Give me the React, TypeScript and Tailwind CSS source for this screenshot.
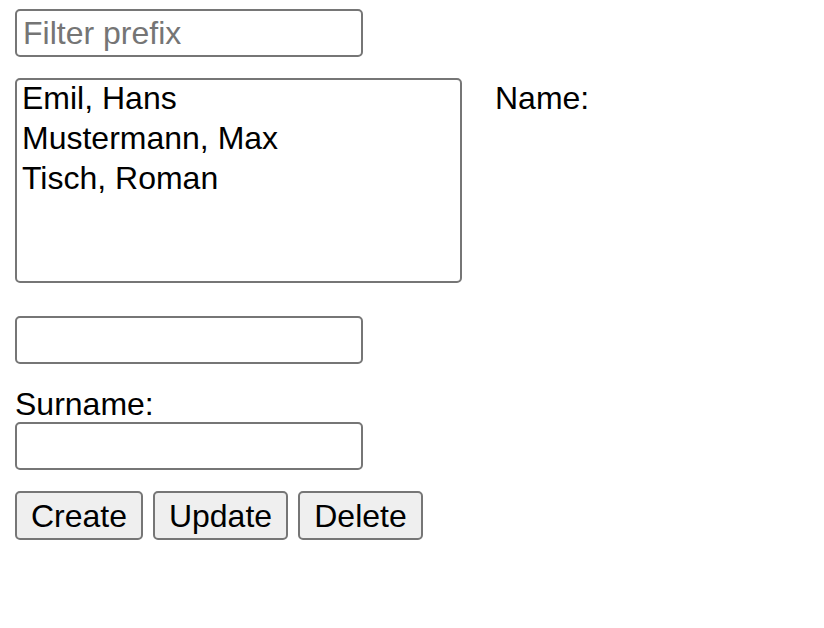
import React, { useState } from 'react';

type Person = { id: number; name: string; surname: string };

const initialPeople: Person[] = [
    { id: 1, name: 'Hans', surname: 'Emil' },
    { id: 2, name: 'Max', surname: 'Mustermann' },
    { id: 3, name: 'Roman', surname: 'Tisch' },
];

const inputClass =
    'block w-[348px] h-[48px] border-2 border-[#767676] rounded-[5px] bg-white px-[6px] outline-none placeholder:text-[#757575]';

const buttonClass =
    'h-[49px] border-2 border-[#767676] rounded-[5px] bg-[#efefef] text-black leading-none';

const App = () => {
    const [people, setPeople] = useState<Person[]>(initialPeople);
    const [filter, setFilter] = useState('');
    const [selected, setSelected] = useState<number | null>(null);
    const [name, setName] = useState('');
    const [surname, setSurname] = useState('');
    const [nextId, setNextId] = useState(4);

    const visible = people.filter((p) => p.surname.toLowerCase().startsWith(filter.toLowerCase()));

    const select = (p: Person) => {
        setSelected(p.id);
        setName(p.name);
        setSurname(p.surname);
    };

    const create = () => {
        if (!name && !surname) return;
        setPeople([...people, { id: nextId, name, surname }]);
        setNextId(nextId + 1);
    };

    const update = () => {
        if (selected === null) return;
        setPeople(people.map((p) => (p.id === selected ? { ...p, name, surname } : p)));
    };

    const remove = () => {
        if (selected === null) return;
        setPeople(people.filter((p) => p.id !== selected));
        setSelected(null);
        setName('');
        setSurname('');
    };

    return (
        <div className="min-h-[628px] bg-white pl-[15px] pt-[9px] font-['Liberation_Sans',Arial,sans-serif] text-[32px] text-black">
            <input
                className={inputClass}
                placeholder="Filter prefix"
                value={filter}
                onChange={(e) => setFilter(e.target.value)}
            />

            <div className="mt-[21px] flex items-start">
                <ul
                    role="listbox"
                    className="w-[447px] h-[205px] overflow-hidden border-2 border-[#767676] rounded-[5px] bg-white"
                >
                    {visible.map((p) => (
                        <li
                            key={p.id}
                            role="option"
                            aria-selected={selected === p.id}
                            onClick={() => select(p)}
                            className={`px-[5px] pb-[4px] leading-[36px] cursor-default ${
                                selected === p.id ? 'bg-[#cecece]' : ''
                            }`}
                        >
                            {p.surname}, {p.name}
                        </li>
                    ))}
                </ul>
                <label className="ml-[33px] mt-[2px] leading-[36px]">Name:</label>
            </div>

            <input className={`${inputClass} mt-[33px]`} value={name} onChange={(e) => setName(e.target.value)} />

            <label className="block mt-[22px] leading-[36px]">Surname:</label>
            <input className={inputClass} value={surname} onChange={(e) => setSurname(e.target.value)} />

            <div className="mt-[21px] flex gap-[10px]">
                <button onClick={create} className={`${buttonClass} w-[128px]`}>Create</button>
                <button onClick={update} className={`${buttonClass} w-[135px]`}>Update</button>
                <button onClick={remove} className={`${buttonClass} w-[125px]`}>Delete</button>
            </div>
        </div>
    );
};

export default App;
